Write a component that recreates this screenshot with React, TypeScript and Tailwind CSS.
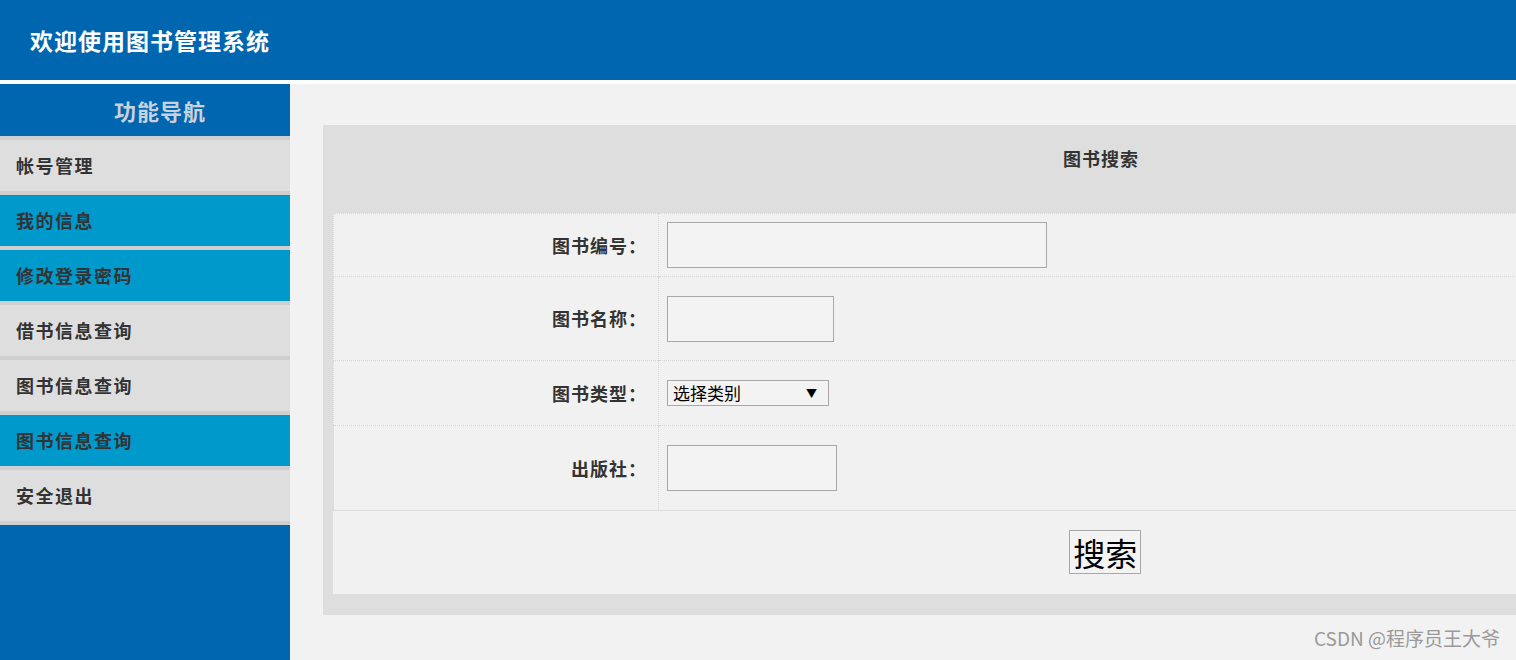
import React from 'react';

const navItems = [
  { label: '帐号管理', active: false },
  { label: '我的信息', active: true },
  { label: '修改登录密码', active: true },
  { label: '借书信息查询', active: false },
  { label: '图书信息查询', active: false },
  { label: '图书信息查询', active: true },
  { label: '安全退出', active: false },
];

const font = "font-['Noto_Sans_CJK_SC',sans-serif]";

const Label: React.FC<{ text: string }> = ({ text }) => (
  <td className="w-[325px] border-r border-dotted border-[#d6d6d6] pr-[11px] text-right text-[18px] font-bold tracking-[1px] text-[#333]">
    {text}
  </td>
);

const App: React.FC = () => {
  return (
    <div className={`h-[660px] w-[1516px] overflow-hidden bg-white ${font}`}>
      {/* 顶部标题 */}
      <div className="flex h-[80px] items-center bg-[#0066b0] pl-[30px]">
        <h1 className="text-[23px] font-bold tracking-[1px] text-white">欢迎使用图书管理系统</h1>
      </div>

      <div className="mt-[4px] flex h-[576px]">
        {/* 左侧导航 */}
        <aside className="w-[290px] shrink-0 bg-[#0066b0]">
          <div className="flex h-[52px] items-center justify-center pl-[30px] text-[22px] font-bold tracking-[1px] text-[#c9d1dc]">
            功能导航
          </div>
          <ul>
            {navItems.map((item, index) => (
              <li
                key={index}
                className={`flex h-[55px] items-center border-t-4 border-[#cfcfcf] pl-[16px] text-[18px] font-bold tracking-[1.5px] text-[#333] ${
                  item.active ? 'bg-[#0099cc]' : 'bg-[#dedede]'
                } ${index === navItems.length - 1 ? 'h-[59px] border-b-4' : ''}`}
              >
                {item.label}
              </li>
            ))}
          </ul>
        </aside>

        {/* 主体 */}
        <main className="relative flex-1 overflow-hidden bg-[#f2f2f2] pl-[33px] pt-[41px]">
          <div className="w-[1554px] bg-[#dedede] pb-[21px] pl-[10px]">
            <div className="flex h-[88px] justify-center pt-[20px] pr-[8px] text-[18px] font-bold tracking-[1px] text-[#333]">
              图书搜索
            </div>
            <table className="w-full border-collapse bg-[#f1f1f1]">
              <tbody>
                <tr className="h-[63px] border-y border-l border-dotted border-[#d6d6d6]">
                  <Label text="图书编号：" />
                  <td className="pl-[8px]">
                    <input className="h-[46px] w-[380px] border border-[#a8a8a8] bg-[#f3f3f3] outline-none" />
                  </td>
                </tr>
                <tr className="h-[84px] border-b border-l border-dotted border-[#d6d6d6]">
                  <Label text="图书名称：" />
                  <td className="pl-[8px]">
                    <input className="h-[46px] w-[167px] border border-[#a8a8a8] bg-[#f3f3f3] outline-none" />
                  </td>
                </tr>
                <tr className="h-[65px] border-b border-l border-dotted border-[#d6d6d6]">
                  <Label text="图书类型：" />
                  <td className="pl-[8px]">
                    <div className="flex h-[26px] w-[162px] items-center justify-between border border-[#a8a8a8] bg-[#f3f3f3] pl-[5px] pr-[11px] text-[17px] text-black">
                      <span>选择类别</span>
                      <span className="text-[11px]">▼</span>
                    </div>
                  </td>
                </tr>
                <tr className="h-[85px] border-b border-l border-solid border-[#dcdcdc]">
                  <Label text="出版社：" />
                  <td className="pl-[8px]">
                    <input className="h-[46px] w-[170px] border border-[#a8a8a8] bg-[#f3f3f3] outline-none" />
                  </td>
                </tr>
                <tr className="h-[83px]">
                  <td colSpan={2} className="text-center">
                    <button className="h-[44px] w-[72px] border border-[#a8a8a8] bg-[#f3f3f3] text-[32px] leading-none text-black">
                      搜索
                    </button>
                  </td>
                </tr>
              </tbody>
            </table>
          </div>
          <div className="absolute bottom-[8px] right-[16px] text-[19px] text-[#9a9a9a]">CSDN @程序员王大爷</div>
        </main>
      </div>
    </div>
  );
};

export default App;
